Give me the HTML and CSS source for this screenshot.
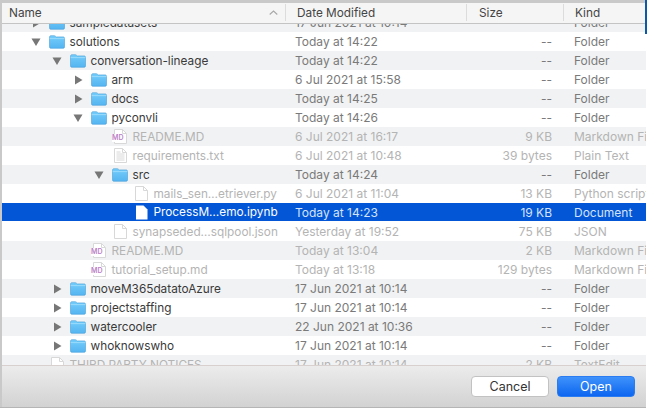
FILE: index.html

```html
<!DOCTYPE html>
<html lang="en">
<head>
  <meta charset="UTF-8">
  <title>Open</title>
  <link rel="stylesheet" href="styles.css">
</head>
<body>

<svg class="defs" width="0" height="0">
  <defs>
    <linearGradient id="folderFill" x1="0" y1="0" x2="0" y2="1">
      <stop offset="0" stop-color="#74cdfb"/>
      <stop offset="1" stop-color="#55b4f0"/>
    </linearGradient>
    <symbol id="folder" viewBox="0 0 16 14">
      <path d="M.5 2.2C.5 1.2 1.1.7 2 .7h3.4c.8 0 1.1.8 1.8 1.2h6.9c1 0 1.4.6 1.4 1.4v8.6c0 .9-.5 1.4-1.4 1.4H1.9c-.9 0-1.4-.5-1.4-1.4z" fill="url(#folderFill)" stroke="#4a9fd8" stroke-width=".6"/>
      <path d="M.6 3.6h14.8" stroke="#a4dffc" stroke-width=".8"/>
    </symbol>
    <symbol id="file" viewBox="0 0 13 15">
      <path d="M.5.5h8l4 4v10H.5z" fill="#fff" stroke="#d8d8d8"/>
      <path d="M8.5.5v4h4" fill="none" stroke="#d8d8d8"/>
    </symbol>
    <symbol id="textfile" viewBox="0 0 13 15">
      <path d="M.5.5h8l4 4v10H.5z" fill="#fff" stroke="#d8d8d8"/>
      <path d="M8.5.5v4h4" fill="none" stroke="#d8d8d8"/>
      <path d="M2.5 4h4M2.5 6h8M2.5 8h8M2.5 10h8M2.5 12h8" stroke="#d4d4d4" stroke-width=".9"/>
    </symbol>
    <symbol id="selfile" viewBox="0 0 13 15">
      <path d="M1 .5h7.5l4 4v10H1z" fill="#fff"/>
    </symbol>
    <symbol id="open" viewBox="0 0 10 10">
      <path d="M.5 1.5h9L5 9z" fill="#777"/>
    </symbol>
    <symbol id="closed" viewBox="0 0 10 10">
      <path d="M2 .5v9L9.5 5z" fill="#777"/>
    </symbol>
  </defs>
</svg>

<div class="dialog">
  <div class="columns">
    <div class="col col-name">Name
      <svg class="sort" width="9" height="5" viewBox="0 0 9 5"><path d="M.7 4.5 4.5 1l3.8 3.5" fill="none" stroke="#a8a8a8" stroke-width="1.1"/></svg>
    </div>
    <div class="col col-date">Date Modified</div>
    <div class="col col-size">Size</div>
    <div class="col col-kind">Kind</div>
  </div>

  <div class="list">
    <div class="rows">
      <div class="row">
        <div class="name d2"><svg class="arrow"><use href="#closed"/></svg><svg class="folder"><use href="#folder"/></svg>sampledatasets</div>
        <div class="date">17 Jun 2021 at 10:14</div><div class="size">--</div><div class="kind">Folder</div>
      </div>
      <div class="row">
        <div class="name d2"><svg class="arrow"><use href="#open"/></svg><svg class="folder"><use href="#folder"/></svg>solutions</div>
        <div class="date">Today at 14:22</div><div class="size">--</div><div class="kind">Folder</div>
      </div>
      <div class="row">
        <div class="name d3"><svg class="arrow"><use href="#open"/></svg><svg class="folder"><use href="#folder"/></svg>conversation-lineage</div>
        <div class="date">Today at 14:22</div><div class="size">--</div><div class="kind">Folder</div>
      </div>
      <div class="row">
        <div class="name d4"><svg class="arrow"><use href="#closed"/></svg><svg class="folder"><use href="#folder"/></svg>arm</div>
        <div class="date">6 Jul 2021 at 15:58</div><div class="size">--</div><div class="kind">Folder</div>
      </div>
      <div class="row">
        <div class="name d4"><svg class="arrow"><use href="#closed"/></svg><svg class="folder"><use href="#folder"/></svg>docs</div>
        <div class="date">Today at 14:25</div><div class="size">--</div><div class="kind">Folder</div>
      </div>
      <div class="row">
        <div class="name d4"><svg class="arrow"><use href="#open"/></svg><svg class="folder"><use href="#folder"/></svg>pyconvli</div>
        <div class="date">Today at 14:26</div><div class="size">--</div><div class="kind">Folder</div>
      </div>
      <div class="row dim">
        <div class="name d5"><span class="spacer"></span><span class="md"><svg class="file"><use href="#file"/></svg><span class="md-tag">MD</span></span>README.MD</div>
        <div class="date">6 Jul 2021 at 16:17</div><div class="size">9 KB</div><div class="kind">Markdown File</div>
      </div>
      <div class="row dim">
        <div class="name d5"><span class="spacer"></span><svg class="file"><use href="#textfile"/></svg>requirements.txt</div>
        <div class="date">6 Jul 2021 at 10:48</div><div class="size">39 bytes</div><div class="kind">Plain Text</div>
      </div>
      <div class="row">
        <div class="name d5"><svg class="arrow"><use href="#open"/></svg><svg class="folder"><use href="#folder"/></svg>src</div>
        <div class="date">Today at 14:24</div><div class="size">--</div><div class="kind">Folder</div>
      </div>
      <div class="row dim">
        <div class="name d6"><span class="spacer"></span><svg class="file"><use href="#file"/></svg>mails_sen…etriever.py</div>
        <div class="date">6 Jul 2021 at 11:04</div><div class="size">13 KB</div><div class="kind">Python script</div>
      </div>
      <div class="row selected">
        <div class="name d6"><span class="spacer"></span><svg class="file"><use href="#selfile"/></svg>ProcessM…emo.ipynb</div>
        <div class="date">Today at 14:23</div><div class="size">19 KB</div><div class="kind">Document</div>
      </div>
      <div class="row dim">
        <div class="name d5"><span class="spacer"></span><svg class="file"><use href="#file"/></svg>synapseded…sqlpool.json</div>
        <div class="date">Yesterday at 19:52</div><div class="size">75 KB</div><div class="kind">JSON</div>
      </div>
      <div class="row dim">
        <div class="name d4"><span class="spacer"></span><span class="md"><svg class="file"><use href="#file"/></svg><span class="md-tag">MD</span></span>README.MD</div>
        <div class="date">Today at 13:04</div><div class="size">2 KB</div><div class="kind">Markdown File</div>
      </div>
      <div class="row dim">
        <div class="name d4"><span class="spacer"></span><span class="md"><svg class="file"><use href="#file"/></svg><span class="md-tag">MD</span></span>tutorial_setup.md</div>
        <div class="date">Today at 13:18</div><div class="size">129 bytes</div><div class="kind">Markdown File</div>
      </div>
      <div class="row">
        <div class="name d3"><svg class="arrow"><use href="#closed"/></svg><svg class="folder"><use href="#folder"/></svg>moveM365datatoAzure</div>
        <div class="date">17 Jun 2021 at 10:14</div><div class="size">--</div><div class="kind">Folder</div>
      </div>
      <div class="row">
        <div class="name d3"><svg class="arrow"><use href="#closed"/></svg><svg class="folder"><use href="#folder"/></svg>projectstaffing</div>
        <div class="date">17 Jun 2021 at 10:14</div><div class="size">--</div><div class="kind">Folder</div>
      </div>
      <div class="row">
        <div class="name d3"><svg class="arrow"><use href="#closed"/></svg><svg class="folder"><use href="#folder"/></svg>watercooler</div>
        <div class="date">22 Jun 2021 at 10:36</div><div class="size">--</div><div class="kind">Folder</div>
      </div>
      <div class="row">
        <div class="name d3"><svg class="arrow"><use href="#closed"/></svg><svg class="folder"><use href="#folder"/></svg>whoknowswho</div>
        <div class="date">17 Jun 2021 at 10:14</div><div class="size">--</div><div class="kind">Folder</div>
      </div>
      <div class="row dim">
        <div class="name d2"><span class="spacer"></span><svg class="file"><use href="#file"/></svg>THIRD PARTY NOTICES</div>
        <div class="date">17 Jun 2021 at 10:14</div><div class="size">2 KB</div><div class="kind">TextEdit</div>
      </div>
    </div>
  </div>

  <div class="actions">
    <button class="btn" type="button">Cancel</button>
    <button class="btn btn-primary" type="button">Open</button>
  </div>
</div>

<div class="edge"></div>

</body>
</html>
```

FILE: styles.css

```css
* { box-sizing: border-box; }
html, body { margin: 0; padding: 0; }
body { position: relative; width: 647px; height: 409px; overflow: hidden; background-color: #fff; font-family: Inter, "Liberation Sans", sans-serif; font-size: 11.8px; color: #3a3a3a; }
.defs { display: block; height: 0; }

.dialog { display: flex; flex-direction: column; height: 408px; margin-right: 1px; padding-left: 2px; border-top: 3px solid #c9c9c9; border-bottom: 1px solid #b5b5b5; background-color: #c9c9c9; }
.edge { position: absolute; top: 0; right: 0; width: 2px; height: 34px; background-color: #0b5aa8; }

.columns { display: flex; flex: none; height: 21px; background-color: #f5f5f5; border-bottom: 1px solid #c4c4c4; color: #444; }
.col { display: flex; align-items: center; height: 17px; margin-top: 1px; border-right: 1px solid #dcdcdc; }
.col-name { justify-content: space-between; width: 284px; padding: 0 7px 0 7px; }
.col-date { width: 181px; padding-left: 11px; }
.col-size { width: 97px; padding-left: 12px; }
.col-kind { flex: 1; padding-left: 11px; border-right: 0; }

.list { flex: none; height: 341px; overflow: hidden; background-color: #fff; }
.rows { margin-top: -11px; }
.row { display: flex; align-items: center; height: 19px; background-color: #fff; color: #3a3a3a; }
.row:nth-child(odd) { background-color: #f1f2f3; }
.row.dim { color: #b4b4b4; }
.row.selected { height: 18px; margin-bottom: 1px; background-color: #0356d6; color: #fff; }

.name { display: flex; align-items: center; width: 284px; white-space: nowrap; }
.d2 { padding-left: 29px; }
.d3 { padding-left: 50px; }
.d4 { padding-left: 71px; }
.d5 { padding-left: 92px; }
.d6 { padding-left: 113px; }
.arrow { flex: none; width: 10px; height: 10px; margin-right: 8px; }
.spacer { flex: none; width: 18px; }
.folder { flex: none; width: 16px; height: 14px; margin-right: 4.5px; }
.file { flex: none; display: block; width: 13px; height: 15px; margin: 0 5.5px 0 2px; }
.md { position: relative; display: flex; }
.md-tag { position: absolute; left: 0; top: 5px; font-size: 7px; font-weight: 600; line-height: 8px; color: #bb82c6; background-color: #fff; }

.date { width: 181px; padding-left: 9px; font-size: 12px; color: #7a7a7a; white-space: nowrap; }
.size { width: 85px; font-size: 12px; text-align: right; color: #7a7a7a; white-space: nowrap; }
.kind { flex: 1; padding-left: 22px; overflow: hidden; font-size: 12px; color: #7a7a7a; white-space: nowrap; }
.row.dim .date, .row.dim .size, .row.dim .kind { color: #b4b4b4; }
.row.selected .date, .row.selected .size, .row.selected .kind { color: #d5e3f8; }

.actions { display: flex; flex: 1; align-items: center; justify-content: flex-end; gap: 8px; padding-right: 11px; background: linear-gradient(#ececec, #d2d2d2); border-top: 1px solid #d8cfcf; }
.btn { width: 78px; height: 21px; padding: 0; font-family: inherit; font-size: 12.5px; color: #333; background-color: #fff; border: 1px solid #c2c2c2; border-radius: 4px; }
.btn-primary { color: #fff; background: linear-gradient(#3f92fb, #0d66f0); border-color: #2a7cf0; }
```
